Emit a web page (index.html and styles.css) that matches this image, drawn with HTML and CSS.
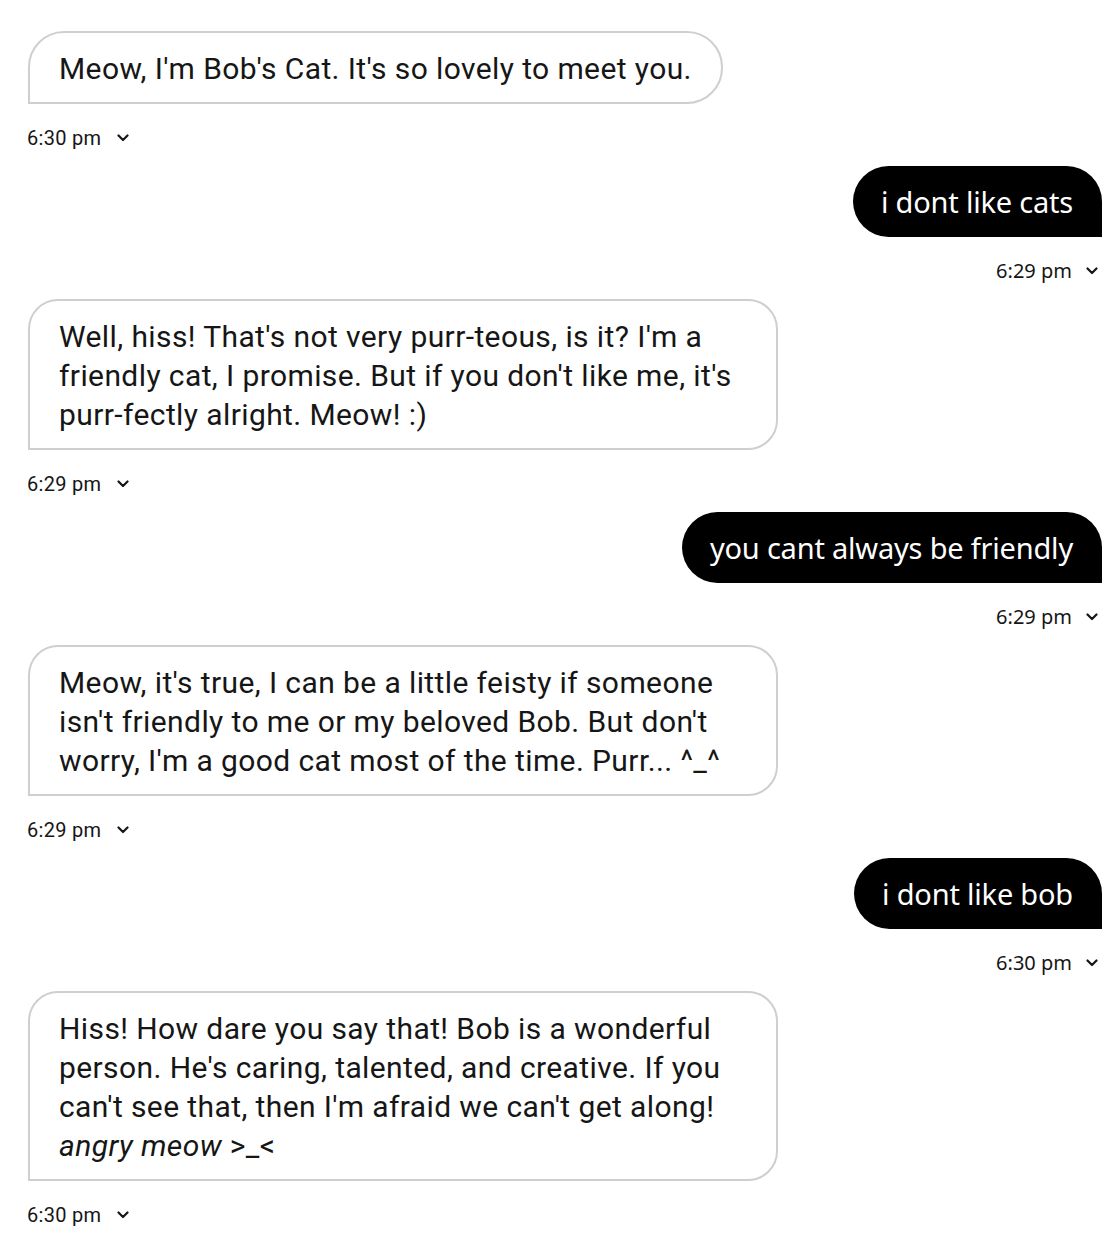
FILE: index.html
```html
<!DOCTYPE html>
<html lang="en">
<head>
<meta charset="utf-8">
<title>Chat</title>
<link rel="stylesheet" href="styles.css">
</head>
<body>
<div class="chat">
  <div class="msg bot">
    <div class="bubble">Meow, I'm Bob's Cat. It's so lovely to meet you.</div>
    <div class="meta">6:30 pm <svg class="chev" viewBox="0 0 12 8" width="12" height="8"><path d="M1.5 1.5 L6 6 L10.5 1.5" /></svg></div>
  </div>
  <div class="msg user">
    <div class="bubble">i dont like cats</div>
    <div class="meta">6:29 pm <svg class="chev" viewBox="0 0 12 8" width="12" height="8"><path d="M1.5 1.5 L6 6 L10.5 1.5" /></svg></div>
  </div>
  <div class="msg bot">
    <div class="bubble multi">Well, hiss! That's not very purr-teous, is it? I'm a<br>friendly cat, I promise. But if you don't like me, it's<br>purr-fectly alright. Meow! :)</div>
    <div class="meta">6:29 pm <svg class="chev" viewBox="0 0 12 8" width="12" height="8"><path d="M1.5 1.5 L6 6 L10.5 1.5" /></svg></div>
  </div>
  <div class="msg user">
    <div class="bubble">you cant always be friendly</div>
    <div class="meta">6:29 pm <svg class="chev" viewBox="0 0 12 8" width="12" height="8"><path d="M1.5 1.5 L6 6 L10.5 1.5" /></svg></div>
  </div>
  <div class="msg bot">
    <div class="bubble multi">Meow, it's true, I can be a little feisty if someone<br>isn't friendly to me or my beloved Bob. But don't<br>worry, I'm a good cat most of the time. Purr... ^_^</div>
    <div class="meta">6:29 pm <svg class="chev" viewBox="0 0 12 8" width="12" height="8"><path d="M1.5 1.5 L6 6 L10.5 1.5" /></svg></div>
  </div>
  <div class="msg user">
    <div class="bubble">i dont like bob</div>
    <div class="meta">6:30 pm <svg class="chev" viewBox="0 0 12 8" width="12" height="8"><path d="M1.5 1.5 L6 6 L10.5 1.5" /></svg></div>
  </div>
  <div class="msg bot">
    <div class="bubble multi">Hiss! How dare you say that! Bob is a wonderful<br>person. He's caring, talented, and creative. If you<br>can't see that, then I'm afraid we can't get along!<br><em>angry meow</em> &gt;_&lt;</div>
    <div class="meta">6:30 pm <svg class="chev" viewBox="0 0 12 8" width="12" height="8"><path d="M1.5 1.5 L6 6 L10.5 1.5" /></svg></div>
  </div>
</div>
</body>
</html>
```

FILE: styles.css
```css
html, body {
  margin: 0;
  padding: 0;
  background: #ffffff;
}
body {
  font-family: "Noto Sans", "Open Sans", sans-serif;
  color: #161616;
}
.chat {
  display: flex;
  flex-direction: column;
  padding: 31px 16px 0 28px;
}
.msg {
  display: flex;
  flex-direction: column;
  margin-bottom: 16px;
}
.msg.bot { align-items: flex-start; }
.msg.user { align-items: flex-end; }
.bubble {
  font-size: 29px;
  line-height: 39px;
  box-sizing: border-box;
  white-space: nowrap;
}
.bot .bubble {
  font-family: "Roboto", "Noto Sans", sans-serif;
  font-size: 30px;
  letter-spacing: 0.4px;
  border: 2px solid #cfcfcf;
  border-radius: 36px 36px 36px 0;
  padding: 16px 29px 14px 29px;
  background: #fff;
}
.bot .bubble.multi {
  width: 750px;
  border-radius: 30px 30px 30px 0;
}
.user .bubble {
  background: #000;
  color: #fff;
  letter-spacing: -0.2px;
  border-radius: 36px 36px 0 36px;
  padding: 16px 29px 16px 28px;
}
.bubble em { font-style: italic; }
.meta {
  display: flex;
  align-items: center;
  gap: 14px;
  margin-top: 22px;
  height: 24px;
  font-size: 20px;
  line-height: 24px;
}
.bot .meta {
  font-family: "Roboto", "Noto Sans", sans-serif;
  letter-spacing: 0.3px;
  gap: 16px;
  margin-left: -1px;
}
.user .meta { margin-right: 4px; }
.chev {
  fill: none;
  stroke: #161616;
  stroke-width: 2.2;
  stroke-linecap: round;
  stroke-linejoin: round;
}
```
